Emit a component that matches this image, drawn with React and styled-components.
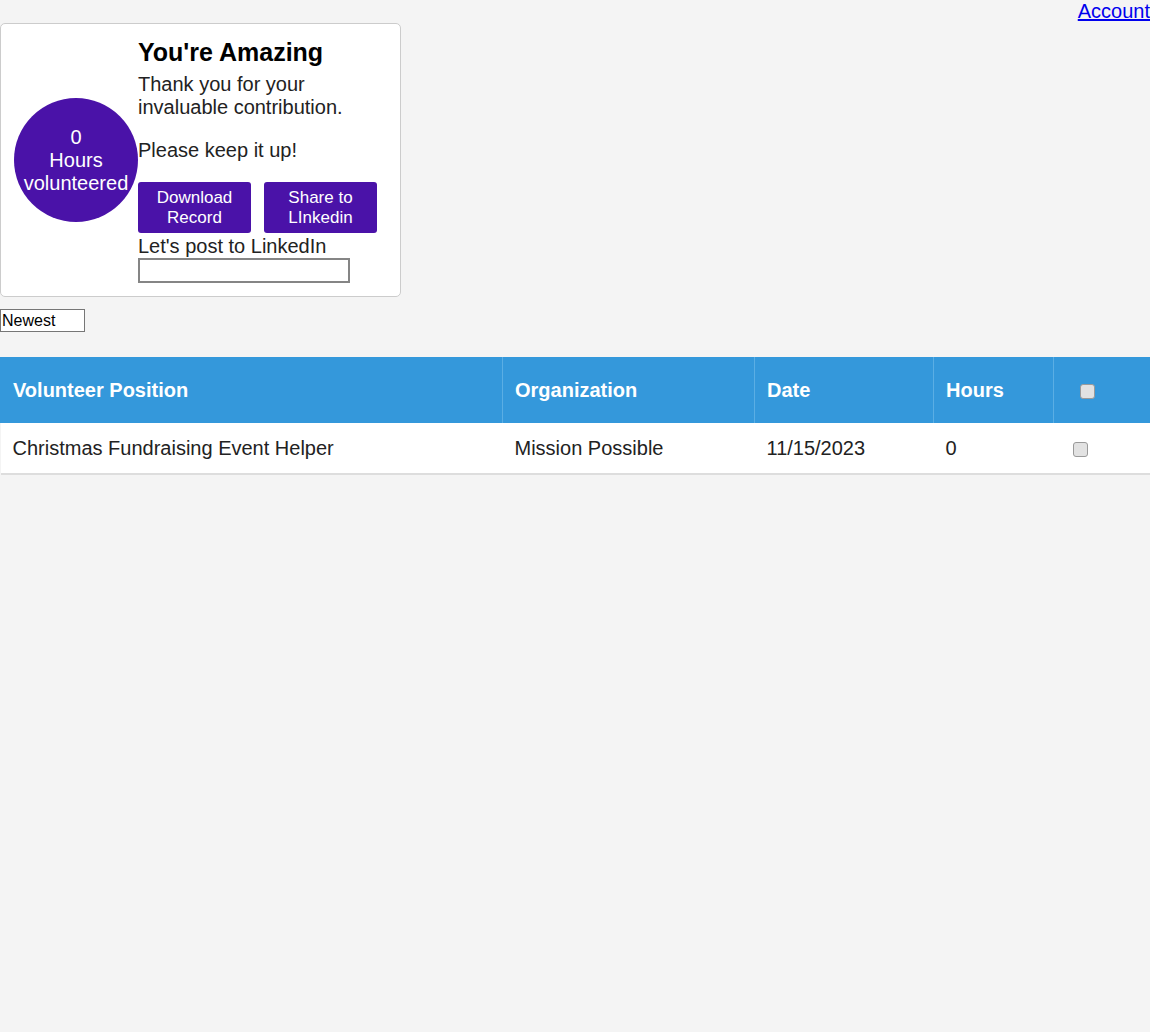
import React from 'react'
import styled, { createGlobalStyle } from 'styled-components'

const GlobalStyle = createGlobalStyle`
  html, body {
    margin: 0;
    padding: 0;
    background: #f4f4f4;
    font-family: "Liberation Sans", Arial, sans-serif;
  }
`

const TopBar = styled.div`
  text-align: right;
  font-size: 20px;
  line-height: 23px;
  a {
    color: #0000ee;
  }
`

const Card = styled.div`
  width: 401px;
  box-sizing: border-box;
  display: flex;
  align-items: center;
  padding: 13px;
  background: #fff;
  border: 1px solid #cccccc;
  border-radius: 5px;
`

const Circle = styled.div`
  width: 124px;
  height: 124px;
  flex-shrink: 0;
  border-radius: 50%;
  background: #4a12a8;
  color: #fff;
  font-size: 20px;
  line-height: 23px;
  display: flex;
  flex-direction: column;
  align-items: center;
  justify-content: center;
  text-align: center;
`

const Info = styled.div`
  flex: 1;
  padding-top: 1px;
  color: #222;
`

const Title = styled.h2`
  margin: 0 0 7px;
  font-size: 25px;
  line-height: 28px;
  color: #000;
`

const Text = styled.p`
  margin: 0 0 20px;
  font-size: 20px;
  line-height: 23px;
`

const Buttons = styled.div`
  display: flex;
  gap: 13px;
`

const Button = styled.button`
  width: 113px;
  height: 51px;
  padding: 0 6px;
  border: none;
  border-radius: 3px;
  background: #4a12a8;
  color: #fff;
  font-family: inherit;
  font-size: 17px;
  line-height: 20px;
`

const Label = styled.div`
  margin-top: 2px;
  font-size: 20px;
  line-height: 23px;
`

const TextInput = styled.input`
  display: block;
  width: 212px;
  height: 25px;
  box-sizing: border-box;
  border: 2px solid #858585;
  background: #fff;
`

const Sort = styled.select`
  display: block;
  margin: 12px 0 25px;
  width: 85px;
  height: 23px;
  padding: 0 1px;
  appearance: none;
  border: 1px solid #767676;
  border-radius: 0;
  background: #fff;
  font-family: inherit;
  font-size: 16px;
  color: #000;
`

const Table = styled.table`
  width: 100%;
  border-collapse: collapse;
  font-size: 20px;
`

const Th = styled.th`
  width: ${(p) => p.w}px;
  height: 66px;
  padding: 0 12px;
  box-sizing: border-box;
  background: #3498db;
  color: #fff;
  font-weight: bold;
  text-align: left;
  border-left: 1px solid ${(p) => (p.first ? '#3498db' : '#5aaee4')};
`

const Tr = styled.tr`
  background: #fff;
  border-bottom: 2px solid #dddddd;
`

const Td = styled.td`
  height: 50px;
  padding: 0 12px;
  color: #222;
`

const Check = styled.input.attrs({ type: 'checkbox' })`
  appearance: none;
  width: 15px;
  height: 15px;
  margin: 0 0 0 ${(p) => p.offset}px;
  vertical-align: middle;
  border: 1px solid #9a9a9a;
  border-radius: 3px;
  background: #e2e2e2;
`

const columns = [
  { label: 'Volunteer Position', w: 502 },
  { label: 'Organization', w: 252 },
  { label: 'Date', w: 179 },
  { label: 'Hours', w: 120 },
]

const records = [
  {
    position: 'Christmas Fundraising Event Helper',
    organization: 'Mission Possible',
    date: '11/15/2023',
    hours: 0,
  },
]

export default function App() {
  return (
    <>
      <GlobalStyle />
      <TopBar>
        <a href="#">Account</a>
      </TopBar>
      <Card>
        <Circle>
          <div>0</div>
          <div>Hours</div>
          <div>volunteered</div>
        </Circle>
        <Info>
          <Title>You're Amazing</Title>
          <Text>Thank you for your invaluable contribution.</Text>
          <Text>Please keep it up!</Text>
          <Buttons>
            <Button>Download Record</Button>
            <Button>Share to LInkedin</Button>
          </Buttons>
          <Label>Let's post to LinkedIn</Label>
          <TextInput type="text" />
        </Info>
      </Card>
      <Sort defaultValue="newest">
        <option value="newest">Newest</option>
        <option value="oldest">Oldest</option>
      </Sort>
      <Table>
        <thead>
          <tr>
            {columns.map((c, i) => (
              <Th key={c.label} w={c.w} first={i === 0}>
                {c.label}
              </Th>
            ))}
            <Th>
              <Check offset={14} />
            </Th>
          </tr>
        </thead>
        <tbody>
          {records.map((r) => (
            <Tr key={r.position}>
              <Td>{r.position}</Td>
              <Td>{r.organization}</Td>
              <Td>{r.date}</Td>
              <Td>{r.hours}</Td>
              <Td>
                <Check offset={7} />
              </Td>
            </Tr>
          ))}
        </tbody>
      </Table>
    </>
  )
}
